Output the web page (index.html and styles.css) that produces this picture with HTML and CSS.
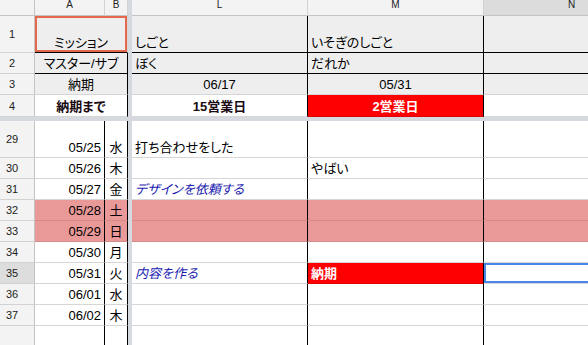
FILE: index.html
```html
<!DOCTYPE html>
<html lang="ja">
<head>
<meta charset="utf-8">
<title>スケジュール</title>
<link rel="stylesheet" href="styles.css">
</head>
<body>
<div class="sheet">
  <!-- column headers -->
  <div class="corner"></div>
  <div class="colhead"><span>A</span></div>
  <div class="colhead"><span>B</span></div>
  <div class="freeze-v"></div>
  <div class="colhead"><span>L</span></div>
  <div class="colhead"><span>M</span></div>
  <div class="colhead active"><span>N</span></div>

  <!-- frozen rows -->
  <div class="rowhead">1</div>
  <div class="cell shade span2 center chosen rule-b">ミッション</div>
  <div class="freeze-v"></div>
  <div class="cell shade rule-r rule-b">しごと</div>
  <div class="cell shade rule-r rule-b">いそぎのしごと</div>
  <div class="cell shade rule-b"></div>

  <div class="rowhead">2</div>
  <div class="cell shade span2 center rule-r rule-b">マスター/サブ</div>
  <div class="freeze-v"></div>
  <div class="cell shade rule-r rule-b">ぼく</div>
  <div class="cell shade rule-r rule-b">だれか</div>
  <div class="cell shade rule-b"></div>

  <div class="rowhead">3</div>
  <div class="cell shade span2 center rule-r">納期</div>
  <div class="freeze-v"></div>
  <div class="cell shade center rule-r">06/17</div>
  <div class="cell shade center rule-r">05/31</div>
  <div class="cell shade"></div>

  <div class="rowhead">4</div>
  <div class="cell span2 center rule-r strong">納期まで</div>
  <div class="freeze-v"></div>
  <div class="cell center rule-r strong">15営業日</div>
  <div class="cell center rule-r strong alert">2営業日</div>
  <div class="cell"></div>

  <div class="freeze-h"></div>

  <!-- schedule rows -->
  <div class="rowhead">29</div>
  <div class="cell right rule-r">05/25</div>
  <div class="cell center rule-r">水</div>
  <div class="freeze-v"></div>
  <div class="cell rule-r">打ち合わせをした</div>
  <div class="cell rule-r"></div>
  <div class="cell"></div>

  <div class="rowhead">30</div>
  <div class="cell right rule-r">05/26</div>
  <div class="cell center rule-r">木</div>
  <div class="freeze-v"></div>
  <div class="cell rule-r"></div>
  <div class="cell rule-r">やばい</div>
  <div class="cell"></div>

  <div class="rowhead">31</div>
  <div class="cell right rule-r">05/27</div>
  <div class="cell center rule-r">金</div>
  <div class="freeze-v"></div>
  <div class="cell rule-r task">デザインを依頼する</div>
  <div class="cell rule-r"></div>
  <div class="cell"></div>

  <div class="rowhead">32</div>
  <div class="cell right rule-r holiday">05/28</div>
  <div class="cell center rule-r holiday">土</div>
  <div class="freeze-v"></div>
  <div class="cell rule-r holiday"></div>
  <div class="cell rule-r holiday"></div>
  <div class="cell holiday"></div>

  <div class="rowhead">33</div>
  <div class="cell right rule-r holiday">05/29</div>
  <div class="cell center rule-r holiday">日</div>
  <div class="freeze-v"></div>
  <div class="cell rule-r holiday"></div>
  <div class="cell rule-r holiday"></div>
  <div class="cell holiday"></div>

  <div class="rowhead">34</div>
  <div class="cell right rule-r">05/30</div>
  <div class="cell center rule-r">月</div>
  <div class="freeze-v"></div>
  <div class="cell rule-r"></div>
  <div class="cell rule-r"></div>
  <div class="cell"></div>

  <div class="rowhead active">35</div>
  <div class="cell right rule-r">05/31</div>
  <div class="cell center rule-r">火</div>
  <div class="freeze-v"></div>
  <div class="cell rule-r task">内容を作る</div>
  <div class="cell rule-r strong alert">納期</div>
  <div class="cell current"></div>

  <div class="rowhead">36</div>
  <div class="cell right rule-r">06/01</div>
  <div class="cell center rule-r">水</div>
  <div class="freeze-v"></div>
  <div class="cell rule-r"></div>
  <div class="cell rule-r"></div>
  <div class="cell"></div>

  <div class="rowhead">37</div>
  <div class="cell right rule-r">06/02</div>
  <div class="cell center rule-r">木</div>
  <div class="freeze-v"></div>
  <div class="cell rule-r"></div>
  <div class="cell rule-r"></div>
  <div class="cell"></div>

  <div class="rowhead open"></div>
  <div class="cell open rule-r"></div>
  <div class="cell open rule-r"></div>
  <div class="freeze-v"></div>
  <div class="cell open rule-r"></div>
  <div class="cell open rule-r"></div>
  <div class="cell open"></div>
</div>
</body>
</html>
```

FILE: styles.css
```css
html, body {
  margin: 0;
  padding: 0;
  background: #ffffff;
}

body {
  width: 588px;
  height: 345px;
  overflow: hidden;
  font-family: "Liberation Sans", "Noto Sans CJK JP", sans-serif;
  color: #000;
}

.sheet {
  display: grid;
  width: 660px;
  grid-template-columns: 35px 70px 23px 4px 176px 176px 176px;
  grid-template-rows: 16px 37px 21px 21px 22px 4px 37px repeat(8, 21px) 20px;
}

/* headers */
.corner {
  box-sizing: border-box;
  background: #f3f3f3;
  border-right: 1px solid #c4c4c4;
  border-bottom: 1px solid #c4c4c4;
}

.colhead {
  box-sizing: border-box;
  background: #f3f3f3;
  border-right: 1px solid #d2d2d2;
  border-bottom: 1px solid #c4c4c4;
  display: flex;
  justify-content: center;
  align-items: flex-start;
  overflow: hidden;
  font-size: 10px;
  color: #222;
}

.colhead span {
  line-height: 10px;
  padding-top: 0;
}

.colhead.active {
  background: #dcdcdc;
}

.rowhead {
  box-sizing: border-box;
  background: #f3f3f3;
  border-right: 1px solid #c4c4c4;
  border-bottom: 1px solid #d2d2d2;
  display: flex;
  align-items: center;
  justify-content: center;
  padding-right: 10px;
  font-size: 11px;
  color: #222;
}

.rowhead.active {
  background: #dddddd;
}

.rowhead.open {
  border-bottom: none;
}

/* frozen pane dividers */
.freeze-v {
  background: #d6d9df;
}

.freeze-h {
  grid-column: 1 / -1;
  background: #d6d9df;
}

/* cells */
.cell {
  box-sizing: border-box;
  border-right: 1px solid #d6d6d6;
  border-bottom: 1px solid #d6d6d6;
  display: flex;
  align-items: flex-end;
  padding: 0 3px 2px;
  font-size: 13px;
  line-height: 15px;
  white-space: nowrap;
  overflow: hidden;
  font-feature-settings: "palt";
}

.cell.open {
  border-bottom: none;
}

.span2 {
  grid-column: span 2;
}

.center {
  justify-content: center;
}

.right {
  justify-content: flex-end;
}

.shade {
  background: #eeeeee;
}

.rule-r {
  border-right-color: #000;
}

.rule-b {
  border-bottom-color: #000;
}

.strong {
  font-weight: bold;
  color: #1a0a12;
}

.alert {
  background: #ff0000;
  color: #ffffff;
  border-bottom-color: #e00000;
}

.task {
  font-style: italic;
  color: #1a1ab0;
}

.holiday {
  background: #ea9999;
  border-bottom-color: #d68b8b;
}

.chosen {
  box-shadow: inset 0 0 0 2px #e5684c;
}

.current {
  box-shadow: inset 0 0 0 2px #4a86e8;
}
```
